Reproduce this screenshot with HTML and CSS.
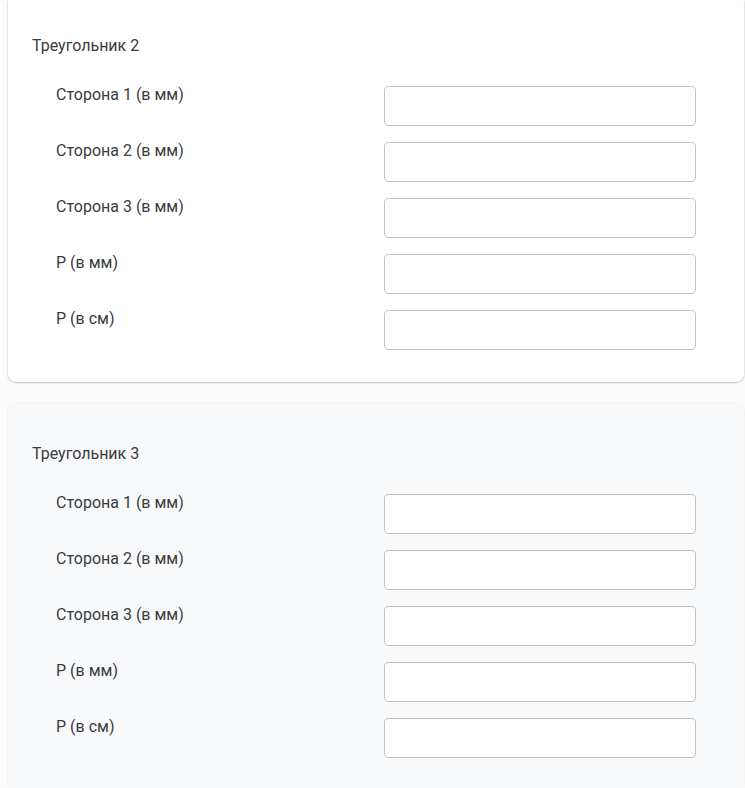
FILE: index.html
```html
<!DOCTYPE html>
<html lang="ru">
<head>
<meta charset="utf-8">
<link rel="stylesheet" href="styles.css">
</head>
<body>
<div class="page">
  <section class="card card-first">
    <div class="title">Треугольник 2</div>
    <div class="rows">
      <div class="row"><span class="label">Сторона 1 (в мм)</span><input class="field" type="text"></div>
      <div class="row"><span class="label">Сторона 2 (в мм)</span><input class="field" type="text"></div>
      <div class="row"><span class="label">Сторона 3 (в мм)</span><input class="field" type="text"></div>
      <div class="row"><span class="label">P (в мм)</span><input class="field" type="text"></div>
      <div class="row"><span class="label">P (в см)</span><input class="field" type="text"></div>
    </div>
  </section>
  <section class="card card-alt">
    <div class="title">Треугольник 3</div>
    <div class="rows">
      <div class="row"><span class="label">Сторона 1 (в мм)</span><input class="field" type="text"></div>
      <div class="row"><span class="label">Сторона 2 (в мм)</span><input class="field" type="text"></div>
      <div class="row"><span class="label">Сторона 3 (в мм)</span><input class="field" type="text"></div>
      <div class="row"><span class="label">P (в мм)</span><input class="field" type="text"></div>
      <div class="row"><span class="label">P (в см)</span><input class="field" type="text"></div>
    </div>
  </section>
</div>
</body>
</html>
```
FILE: styles.css
```css
html, body {
  margin: 0;
  padding: 0;
  background: #fbfbfc;
  font-family: Roboto, "Liberation Sans", sans-serif;
  color: #3a3b3d;
  overflow: hidden;
}
.page {
  padding-left: 8px;
  display: flex;
  flex-direction: column;
  gap: 21px;
}
.card {
  width: 736px;
  box-sizing: border-box;
  background: #ffffff;
  border-radius: 8px;
  box-shadow: 0 1px 2px rgba(0,0,0,0.18), 0 0 0 1px rgba(0,0,0,0.04);
  padding: 39px 48px 32px 24px;
}
.card-first {
  margin-top: -5px;
}
.card-alt {
  background: #f8f9fb;
  box-shadow: 0 0 0 1px rgba(0,0,0,0.03);
}
.title {
  font-size: 16px;
  line-height: 24px;
  height: 24px;
}
.rows {
  margin-top: 28px;
  padding-left: 24px;
  display: flex;
  flex-direction: column;
  gap: 16px;
}
.row {
  display: flex;
  align-items: flex-start;
  justify-content: space-between;
}
.label {
  font-size: 16px;
  line-height: 18px;
}
.field {
  width: 312px;
  height: 40px;
  box-sizing: border-box;
  border: 1px solid #c2c2c2;
  border-radius: 4px;
  background: #ffffff;
  margin: 0;
  padding: 0 10px;
  font: inherit;
}
```
